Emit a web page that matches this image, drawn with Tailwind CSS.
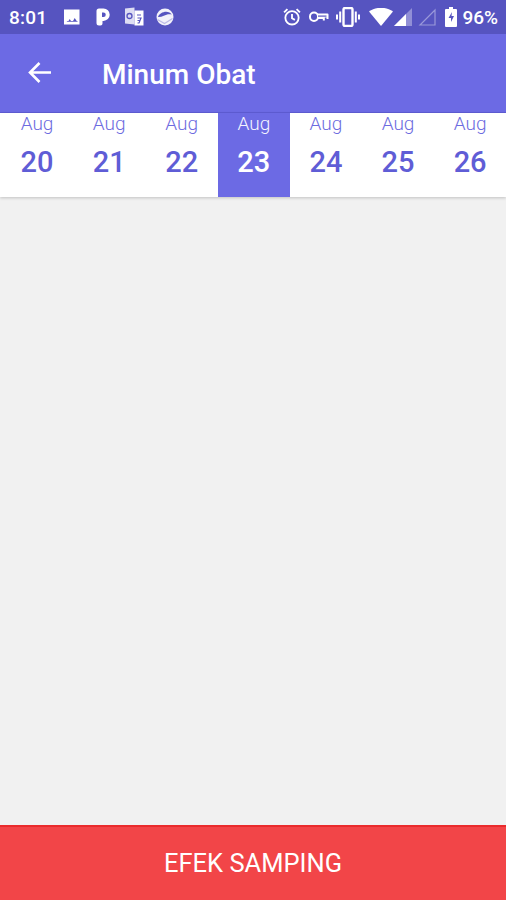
<!doctype html>
<html>
<head>
<meta charset="utf-8">
<script src="https://cdn.jsdelivr.net/npm/@tailwindcss/browser@4"></script>
</head>
<body class="m-0">
<div class="w-[506px] h-[900px] flex flex-col bg-[#f1f1f1] overflow-hidden font-['Roboto',sans-serif]">
  <div class="h-[34px] bg-[#5654c0] flex items-center justify-between pl-[9px] pr-[8px] text-white shrink-0">
    <div class="flex items-center">
      <span class="text-[19px] font-medium tracking-[0.2px] leading-none">8:01</span>
      <svg class="ml-[16px]" width="18" height="18" viewBox="0 0 18 18"><path fill="#fff" fill-rule="evenodd" d="M1 1.500h15.500v15H1z M3.500 13h2l1.200-2 1.300 2h2l1.700-3 2 3h.8v.8h-10z"/></svg>
      <svg class="ml-[14px]" width="16" height="20" viewBox="0 0 16 20"><path fill="#fff" fill-rule="evenodd" d="M4 1.500h4.500a6.200 6.200 0 0 1 0 12.400H7.500v2.600a2 2 0 0 1-2 2H4a2.500 2.500 0 0 1-2.500-2.500V4A2.500 2.500 0 0 1 4 1.500z M7 5.500v4.500h1.500a2.200 2.200 0 0 0 0-4.500z"/></svg>
      <svg class="ml-[13px]" width="20" height="20" viewBox="0 0 20 20"><path fill="#fff" opacity=".8" d="M1 1.500l9.500-1v17l-9.500-1z"/><path fill="#fff" d="M10.500 3.500h9v15h-9z"/><circle cx="5.500" cy="9" r="2.500" fill="none" stroke="#5654c0" stroke-width="1.300"/><path d="M13 8h4M13.500 11h3.500l-1 2.500H13.500M16 13.500l-1 2.500h-1.500" fill="none" stroke="#5654c0" stroke-width="1.200"/></svg>
      <svg class="ml-[11px]" width="20" height="20" viewBox="0 0 20 20"><circle cx="10" cy="10" r="8.500" fill="#fff" opacity=".92"/><path d="M3 10c1.500-4 7-6.500 11.500-4.500 1 .5 1.800 1.200 2.300 2-3-.8-5.500 0-8 1.200-2 1-4 1.500-5.800 1.300z" fill="#5654c0"/><path d="M2.500 12.500l7 4 8-5" fill="none" stroke="#5654c0" stroke-opacity=".35" stroke-width="1.200"/></svg>
    </div>
    <div class="flex items-center">
      <svg class="ml-[1px]" width="20" height="20" viewBox="0 0 24 24"><circle cx="12" cy="13" r="8" fill="none" stroke="#fff" stroke-width="2.200"/><path d="M12 8.500v5l3.500 2M2.500 6.500l4-4M21.500 6.500l-4-4" fill="none" stroke="#fff" stroke-width="2.200"/></svg>
      <svg class="ml-[7px]" width="20" height="14" viewBox="0 0 20 14"><rect x="1" y="2.500" width="8" height="8.500" rx="4" fill="none" stroke="#fff" stroke-width="2"/><path d="M8 3.500h10.500a1 1 0 0 1 1 1v4.500h-2V7.500h-1.700v3h-2v-1.500H8z" fill="#fff"/><path d="M9 5.500h8.500v1.200H9z" fill="#5654c0"/></svg>
      <svg class="ml-[7px]" width="24" height="20" viewBox="0 0 24 20"><rect x="7.500" y="1" width="9" height="18" rx="1.500" fill="none" stroke="#fff" stroke-width="2.400"/><path d="M4.200 4.500v11M1 7.500v5M19.800 4.500v11M23 7.500v5" stroke="#fff" stroke-width="2"/></svg>
      <svg class="ml-[9px]" width="24" height="18" viewBox="0 0 24 18"><path fill="#fff" d="M0 3.500C7-1.500 17-1.500 24 3.500L12 18z"/></svg>
      <svg class="ml-[1px]" width="18" height="18" viewBox="0 0 18 18"><path fill="#fff" d="M0 18L18 0v18z" opacity=".35"/><path fill="#fff" d="M0 18L12 6v12z"/></svg>
      <svg class="ml-[6px]" width="18" height="18" viewBox="0 0 18 18"><path fill="none" stroke="#fff" stroke-opacity=".4" stroke-width="1.200" d="M2 17L17 2v15z"/></svg>
      <svg class="ml-[9px]" width="12" height="20" viewBox="0 0 12 20"><path fill="#fff" d="M4 0h4v2h3a1 1 0 0 1 1 1v16a1 1 0 0 1-1 1H1a1 1 0 0 1-1-1V3a1 1 0 0 1 1-1h3z"/><path fill="#5654c0" d="M7 5L3.500 11H6v4l3-6H6.500z"/></svg>
      <span class="ml-[5px] text-[19px] font-medium leading-none">96%</span>
    </div>
  </div>
  <div class="h-[79px] bg-[#6c6ae4] border-b border-[#5f5dd6] flex items-center text-white shrink-0">
    <svg class="ml-[27px] mt-[-1px]" width="25" height="25" viewBox="0 0 25 25"><path d="M24 12.500H3M12.500 3l-9.500 9.500 9.500 9.500" fill="none" stroke="#fff" stroke-width="2.600"/></svg>
    <span class="ml-[50px] mt-[3px] text-[28px] font-medium leading-none">Minum Obat</span>
  </div>
  <div class="h-[84px] bg-white grid grid-cols-[repeat(7,72.1px)] pl-[1.500px] shadow-[0_1px_3px_rgba(0,0,0,0.2)] text-[#5f5dd6] shrink-0">
    <div class="flex flex-col items-center pr-[1px]"><span class="text-[19px] leading-[21px] text-[#6d6be0] font-light">Aug</span><span class="mt-[11px] text-[29px] leading-[34px] font-medium">20</span></div>
    <div class="flex flex-col items-center pr-[1px]"><span class="text-[19px] leading-[21px] text-[#6d6be0] font-light">Aug</span><span class="mt-[11px] text-[29px] leading-[34px] font-medium">21</span></div>
    <div class="flex flex-col items-center"><span class="text-[19px] leading-[21px] text-[#6d6be0] font-light">Aug</span><span class="mt-[11px] text-[29px] leading-[34px] font-medium">22</span></div>
    <div class="flex flex-col items-center bg-[#6c6ae4] text-white"><span class="text-[19px] leading-[21px] text-[#f4f4ff] font-light">Aug</span><span class="mt-[11px] text-[29px] leading-[34px] font-medium">23</span></div>
    <div class="flex flex-col items-center"><span class="text-[19px] leading-[21px] text-[#6d6be0] font-light">Aug</span><span class="mt-[11px] text-[29px] leading-[34px] font-medium">24</span></div>
    <div class="flex flex-col items-center"><span class="text-[19px] leading-[21px] text-[#6d6be0] font-light">Aug</span><span class="mt-[11px] text-[29px] leading-[34px] font-medium">25</span></div>
    <div class="flex flex-col items-center"><span class="text-[19px] leading-[21px] text-[#6d6be0] font-light">Aug</span><span class="mt-[11px] text-[29px] leading-[34px] font-medium">26</span></div>
  </div>
  <div class="flex-1"></div>
  <div class="h-[75px] bg-[#f24548] border-t-2 border-[#ea2b2d] flex items-center justify-center text-white text-[25.500px] shrink-0 leading-none">EFEK SAMPING</div>
</div>
</body>
</html>
